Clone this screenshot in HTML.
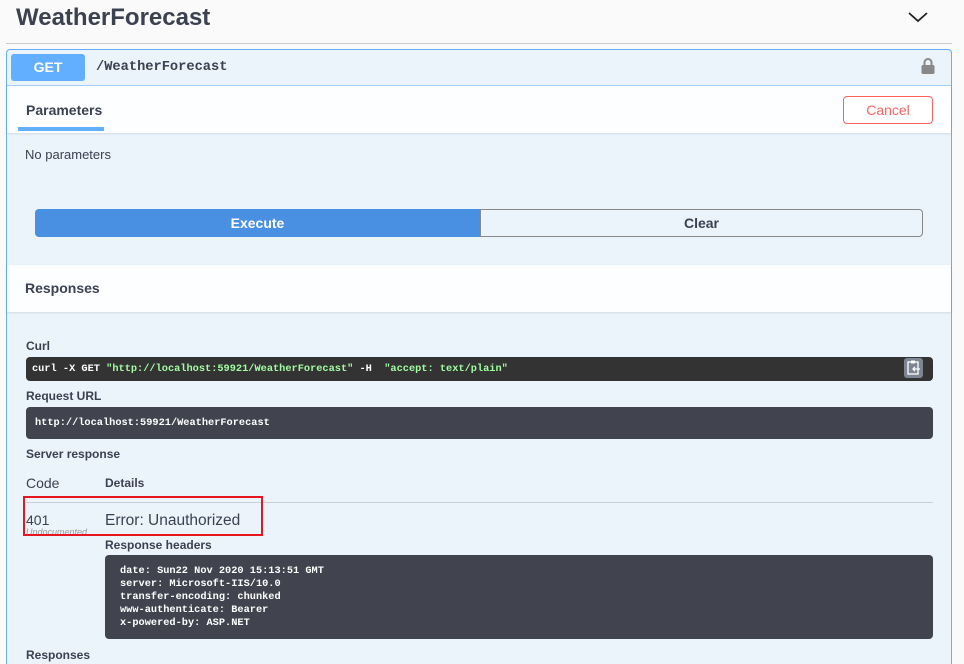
<!DOCTYPE html>
<html style="width:964px;height:664px;overflow:hidden"><head><style>
*{margin:0;padding:0;box-sizing:border-box}
body{width:964px;height:664px;overflow:hidden;background:#fafafa;font-family:"Liberation Sans",sans-serif;color:#3b4151;position:relative}
.a{position:absolute}
.mono{font-family:"Liberation Mono",monospace;font-weight:bold}
</style></head><body>
<div class="a" style="left:16px;top:4px;font-size:24px;font-weight:bold">WeatherForecast</div>
<svg class="a" style="left:907px;top:10px" width="22" height="14"><path d="M2 3 L11 11 L20 3" stroke="#222" stroke-width="1.8" fill="none"/></svg>
<div class="a" style="left:6px;top:43px;width:946px;height:1px;background:#ccc"></div>
<div class="a" style="left:6px;top:49px;width:946px;height:615px;background:#ebf3fb;border:1px solid #61affe;border-bottom:none;border-radius:4px 4px 0 0"></div>
<div class="a" style="left:11px;top:54px;width:74px;height:27px;background:#61affe;border-radius:3px;color:#fff;font-weight:bold;font-size:14px;text-align:center;line-height:27px">GET</div>
<div class="a mono" style="left:96px;top:60px;font-size:13.7px;color:#3b4151">/WeatherForecast</div>
<svg class="a" style="left:920px;top:57px" width="16" height="18"><path d="M4.5 9 V5.5 a3.5 3.5 0 0 1 7 0 V9" stroke="#888" stroke-width="2" fill="none"/><rect x="1.5" y="8" width="13" height="9" rx="1.5" fill="#888"/></svg>
<div class="a" style="left:7px;top:85px;width:944px;height:1px;background:#61affe;opacity:.5"></div>
<div class="a" style="left:7px;top:86px;width:944px;height:47px;background:#fdfeff;box-shadow:0 1px 2px rgba(0,0,0,.1)"></div>
<div class="a" style="left:26px;top:102px;font-size:14px;font-weight:bold">Parameters</div>
<div class="a" style="left:18px;top:127px;width:86px;height:4px;background:#61affe"></div>
<div class="a" style="left:843px;top:96px;width:90px;height:28px;border:1px solid #ff6060;border-radius:4px;color:#ff6060;font-size:14px;text-align:center;line-height:26px;background:#fff">Cancel</div>
<div class="a" style="left:25px;top:147px;font-size:13px">No parameters</div>
<div class="a" style="left:35px;top:209px;width:445px;height:28px;background:#4990e2;border-radius:4px 0 0 4px;color:#fff;font-weight:bold;font-size:14px;text-align:center;line-height:28px">Execute</div>
<div class="a" style="left:480px;top:209px;width:443px;height:28px;border:1px solid #888;border-radius:0 4px 4px 0;font-weight:bold;font-size:14px;text-align:center;line-height:26px">Clear</div>
<div class="a" style="left:7px;top:265px;width:944px;height:47px;background:#fdfeff;box-shadow:0 1px 2px rgba(0,0,0,.1)"></div>
<div class="a" style="left:25px;top:280px;font-size:14px;font-weight:bold">Responses</div>
<div class="a" style="left:26px;top:339px;font-size:12px;font-weight:bold">Curl</div>
<div class="a" style="left:26px;top:357px;width:907px;height:24px;background:#333;border-radius:4px"></div>
<div class="a mono" style="left:32px;top:363px;font-size:10.3px;color:#fff;white-space:pre">curl -X GET <span style="color:#a2fca2">"http://localhost:59921/WeatherForecast"</span> -H  <span style="color:#a2fca2">"accept: text/plain"</span></div>
<div class="a" style="left:904px;top:358px;width:19px;height:20px;background:#7d8492;border-radius:3px"></div>
<svg class="a" style="left:906px;top:360px" width="15" height="16"><rect x="2" y="2" width="10" height="12" fill="none" stroke="#fff" stroke-width="1.3"/><rect x="5" y="0.5" width="4" height="3" fill="#fff"/><path d="M7 9 H14 M9 7 L7 9 L9 11" stroke="#fff" stroke-width="1.3" fill="none"/></svg>
<div class="a" style="left:26px;top:389px;font-size:12px;font-weight:bold">Request URL</div>
<div class="a" style="left:26px;top:407px;width:907px;height:32px;background:#41444e;border-radius:4px"></div>
<div class="a mono" style="left:35px;top:417px;font-size:10.3px;color:#fff">http://localhost:59921/WeatherForecast</div>
<div class="a" style="left:26px;top:447px;font-size:12px;font-weight:bold">Server response</div>
<div class="a" style="left:26px;top:475px;font-size:14px">Code</div>
<div class="a" style="left:105px;top:476px;font-size:12px;font-weight:bold">Details</div>
<div class="a" style="left:26px;top:502px;width:907px;height:1px;background:#c8cfd9"></div>
<div class="a" style="left:26px;top:512px;font-size:14px">401</div>
<div class="a" style="left:26px;top:527px;font-size:9px;font-style:italic;color:#999">Undocumented</div>
<div class="a" style="left:105px;top:512px;font-size:15.5px">Error: Unauthorized</div>
<div class="a" style="left:23px;top:496px;width:240px;height:40px;border:2px solid #e8141e"></div>
<div class="a" style="left:105px;top:538px;font-size:12px;font-weight:bold">Response headers</div>
<div class="a" style="left:105px;top:555px;width:828px;height:84px;background:#41444e;border-radius:4px"></div>
<div class="a mono" style="left:120px;top:565px;font-size:10.3px;color:#fff;line-height:13px;white-space:pre">date: Sun22 Nov 2020 15:13:51 GMT
server: Microsoft-IIS/10.0
transfer-encoding: chunked
www-authenticate: Bearer
x-powered-by: ASP.NET</div>
<div class="a" style="left:26px;top:648px;font-size:12px;font-weight:bold">Responses</div>
</body></html>
